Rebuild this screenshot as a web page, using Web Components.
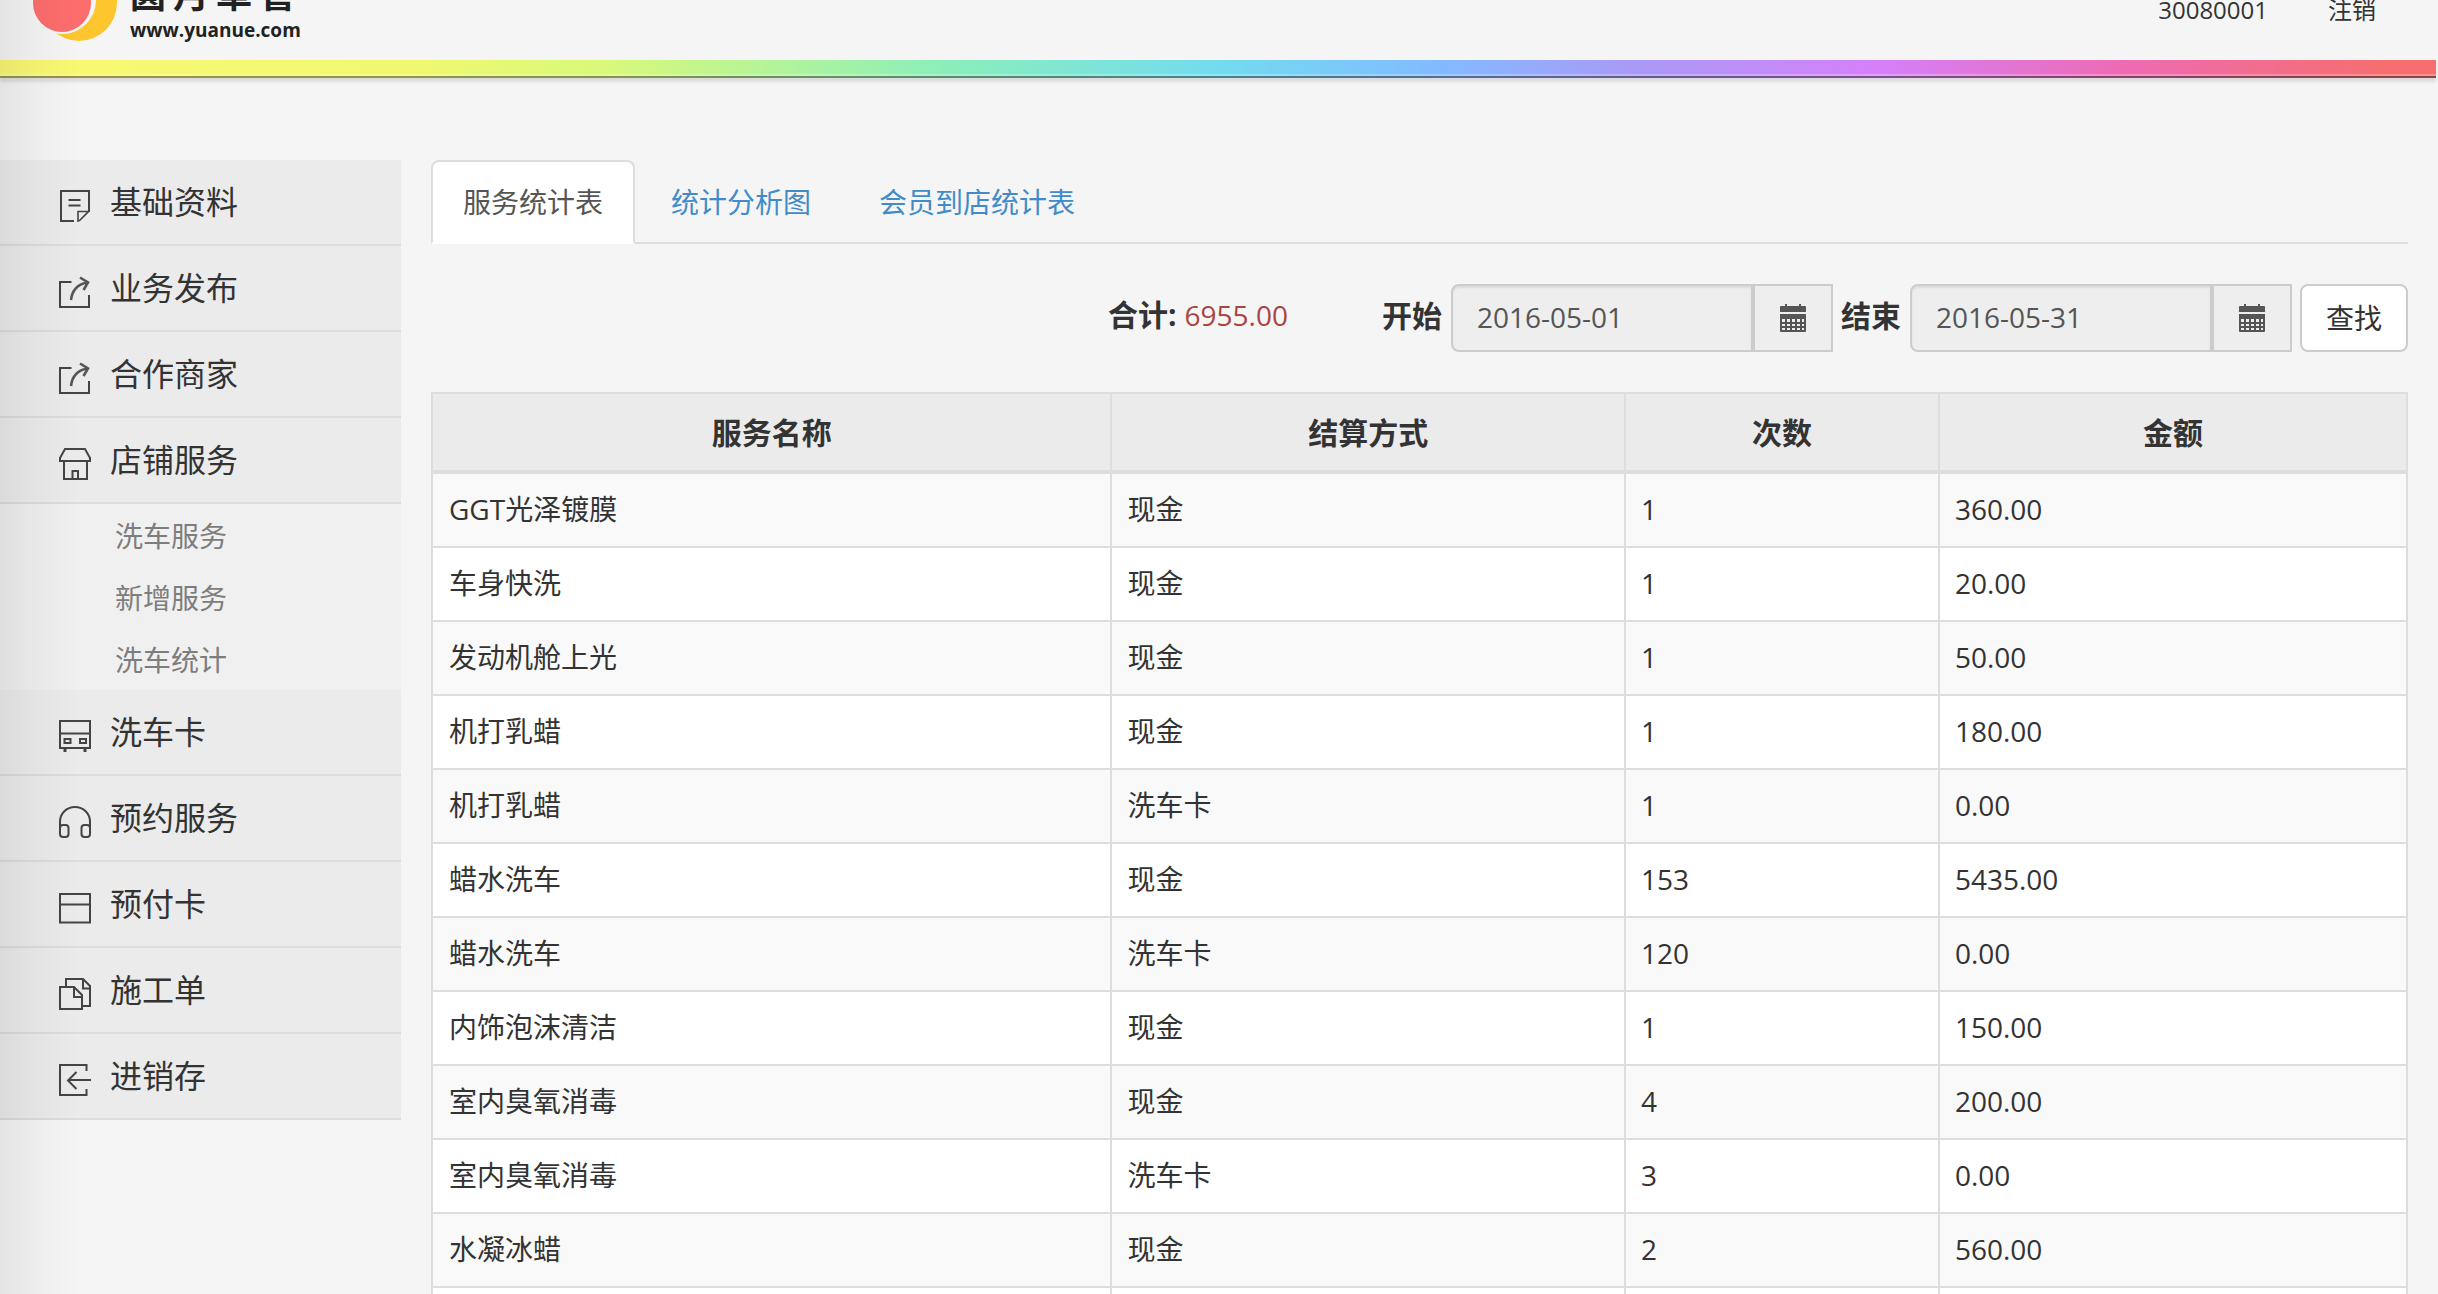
<!DOCTYPE html>
<html lang="zh-CN">
<head>
<meta charset="utf-8">
<title>服务统计表</title>
<style>
html { scrollbar-width: none; background: #f5f5f5; }
body { margin: 0; color: #333; font: 28px/40px "Open Sans", "Noto Sans CJK SC", sans-serif; }
</style>
</head>
<body>
<app-page></app-page>
<script>
const define = (name, html, setup) => customElements.define(name, class extends HTMLElement {
  connectedCallback() {
    if (this.shadowRoot) return;
    const t = document.createElement('template');
    t.innerHTML = html;
    this.attachShadow({ mode: 'open' }).append(t.content.cloneNode(true));
    if (setup) setup(this, this.shadowRoot);
  }
});

const ICONS = {
  note: '<path d="M15 31H2V1h28v21"/><path d="M9.500 10h12M9.500 15.500h12"/><path d="M19 31V21.500h10.500L20.500 30.500z" stroke-width="1.600"/>',
  share: '<path d="M12.500 6H1v25h29V19"/><path d="M12 24C13 15 18 8.500 28 6.500M21 1.500l8 5-4.500 7.500" stroke="#555" stroke-width="2.600"/>',
  shop: '<path d="M6 1h20l5 9v3H1v-3z"/><path d="M5 13v18h23V13M13.500 31v-8h5.500v8"/>',
  bus: '<path d="M1 1h30v27H1zM1 13.500h30"/><path d="M5.500 19h6v4h-6zM21 19h6v4h-6z"/><path d="M6 28v4M26 28v4" stroke-width="3"/>',
  phones: '<path d="M1 27V16C1 7.500 7.500 1 16 1s15 6.500 15 15v11"/><rect x="1" y="19" width="8.500" height="12" rx="3"/><rect x="22.500" y="19" width="8.500" height="12" rx="3"/>',
  card: '<path d="M1 2h30v28.500H1zM1 12.500h30"/>',
  copy: '<path d="M1 9h14l8 8v14H1z"/><path d="M15 9v10h8"/><path d="M7 9V1h17l7 7v20h-8M24 1v9.500h7"/>',
  enter: '<path d="M27.500 7V1H1v30h26.500v-6"/><path d="M32 16H9M17.500 8L9 16.500l8.500 8.500"/>'
};

define('side-item', `<style>
:host { display: block; background: #ebebeb; border-bottom: 2px solid #dcdcdc; }
a { display: flex; align-items: center; gap: 19px; height: 84px; padding-left: 59px; color: #333; font-size: 32px; line-height: 40px; text-decoration: none; }
svg { width: 32px; height: 32px; flex: none; padding-top: 8px; fill: none; stroke: #444; stroke-width: 2; }
</style><a href="#"><svg viewBox="0 0 32 32" aria-hidden="true"></svg><slot></slot></a>`,
  (el, root) => { root.querySelector('svg').innerHTML = ICONS[el.getAttribute('icon')]; });

define('side-sub', `<style>
:host { display: block; background: #f0f0f0; }
a { display: block; padding: 12px 0 10px 115px; color: #7d7d7d; text-decoration: none; }
</style><a href="#"><slot></slot></a>`);

define('side-menu', `<style>
:host { display: block; }
</style><nav>
<side-item icon="note">基础资料</side-item>
<side-item icon="share">业务发布</side-item>
<side-item icon="share">合作商家</side-item>
<side-item icon="shop">店铺服务</side-item>
<side-sub>洗车服务</side-sub>
<side-sub>新增服务</side-sub>
<side-sub>洗车统计</side-sub>
<side-item icon="bus">洗车卡</side-item>
<side-item icon="phones">预约服务</side-item>
<side-item icon="card">预付卡</side-item>
<side-item icon="copy">施工单</side-item>
<side-item icon="enter">进销存</side-item>
</nav>`);

define('brand-logo', `<style>
:host { display: flex; align-items: flex-end; gap: 13px; }
svg { width: 84px; height: 84px; }
.words { display: flex; flex-direction: column; gap: 3px; padding-bottom: 2px; color: #222; font-weight: 700; }
.name { font-size: 36px; line-height: 40px; letter-spacing: 7px; }
.site { font-size: 19px; line-height: 24px; }
</style>
<svg viewBox="0 0 84 84" aria-hidden="true"><circle cx="46" cy="43" r="38" fill="#fdc62f"/><circle cx="29" cy="40" r="34" fill="#f5f5f5"/><circle cx="29" cy="43" r="29" fill="#fe6d6d"/></svg>
<div class="words"><span class="name">圓月車管</span><span class="site">www.yuanue.com</span></div>`);

define('top-bar', `<style>
:host { display: block; margin-right: 2px; }
.bar { display: flex; justify-content: space-between; align-items: flex-end; height: 60px; padding: 0 60px 0 33px; box-sizing: border-box; }
brand-logo { padding-bottom: 16px; }
.user { display: flex; gap: 60px; padding-bottom: 40px; font-size: 24px; line-height: 20px; }
a { color: #333; text-decoration: none; }
.rainbow { height: 18px; box-sizing: border-box; border-bottom: 2px solid rgba(0,0,0,.4); box-shadow: inset 0 -2px rgba(255,255,255,.25), 0 4px 3px rgba(0,0,0,.1);
 background: linear-gradient(90deg, #fbf872 0%, #f0f870 17%, #d8f97a 25%, #8aeebb 39%, #72dcef 50%, #82bbff 59%, #a99af6 67%, #d580fa 77%, #ee6bb4 87%, #f66e6e 98%) border-box; }
</style>
<header><div class="bar"><brand-logo></brand-logo><div class="user"><span>30080001</span><a href="#">注销</a></div></div><div class="rainbow"></div></header>`);

define('tab-bar', `<style>
:host { display: block; }
nav { display: flex; gap: 4px; border-bottom: 2px solid #ddd; }
a { padding: 20px 30px; margin-bottom: -2px; border: 2px solid transparent; border-radius: 8px 8px 0 0; color: #428bca; text-decoration: none; }
a[aria-current] { background: #fff; color: #555; border-color: #ddd #ddd #fff; }
</style><nav><a href="#" aria-current="page">服务统计表</a><a href="#">统计分析图</a><a href="#">会员到店统计表</a></nav>`);

define('date-field', `<style>
:host { display: flex; align-items: center; gap: 9px; }
label { font-size: 30px; font-weight: 700; padding-bottom: 4px; }
.group { display: flex; height: 68px; }
input { box-sizing: border-box; width: 302px; padding: 0 24px 2px; border: 2px solid #ccc; border-radius: 8px 0 0 8px; background: #eee; color: #555; font: inherit; box-shadow: inset 0 2px 2px rgba(0,0,0,.075); outline: 0; }
button { box-sizing: border-box; width: 80px; padding: 0; border: 2px solid #ccc; border-radius: 0; background: #eee; display: grid; place-items: center; }
svg { width: 28px; height: 28px; display: block; }
</style><label for="d"></label><div class="group"><input id="d" type="text" readonly><button type="button" aria-label="选择日期"><svg viewBox="0 0 28 28" aria-hidden="true"><path fill="#555" d="M2 2h4V0h2v2h12V0h2v2h4q1 0 1 1v5H1V3q0-1 1-1zM1 10h26v17q0 1-1 1H2q-1 0-1-1z"/><path fill="#eee" d="M3 15h3v3H3zM8 15h3v3H8zM13 15h3v3h-3zM18 15h3v3h-3zM23 15h2v3h-2zM3 20h3v2H3zM8 20h3v2H8zM13 20h3v2h-3zM18 20h3v2h-3zM23 20h2v2h-2zM3 24h3v2H3zM8 24h3v2H8zM13 24h3v2h-3zM18 24h3v2h-3zM23 24h2v2h-2z"/></svg></button></div>`,
  (el, root) => {
    root.querySelector('label').textContent = el.getAttribute('label');
    root.querySelector('input').value = el.getAttribute('value');
  });

define('filter-bar', `<style>
:host { display: block; }
form { display: flex; justify-content: flex-end; align-items: center; gap: 8px; }
.total { display: flex; gap: 8px; margin-right: 86px; padding-bottom: 6px; }
b { font-size: 30px; }
.sum { color: #a94442; }
.go { height: 68px; padding: 0 24px; border: 2px solid #ccc; border-radius: 8px; background: #fff; color: #333; font: inherit; }
</style><form><div class="total"><b>合计:</b><span class="sum">6955.00</span></div>
<date-field label="开始" value="2016-05-01"></date-field>
<date-field label="结束" value="2016-05-31"></date-field>
<button class="go" type="button">查找</button></form>`);

const ROWS = [
  ['GGT光泽镀膜', '现金', '1', '360.00'],
  ['车身快洗', '现金', '1', '20.00'],
  ['发动机舱上光', '现金', '1', '50.00'],
  ['机打乳蜡', '现金', '1', '180.00'],
  ['机打乳蜡', '洗车卡', '1', '0.00'],
  ['蜡水洗车', '现金', '153', '5435.00'],
  ['蜡水洗车', '洗车卡', '120', '0.00'],
  ['内饰泡沫清洁', '现金', '1', '150.00'],
  ['室内臭氧消毒', '现金', '4', '200.00'],
  ['室内臭氧消毒', '洗车卡', '3', '0.00'],
  ['水凝冰蜡', '现金', '2', '560.00'],
  ['', '', '', '']
];

define('stat-table', `<style>
:host { display: block; }
table { width: 100%; table-layout: fixed; border-collapse: separate; border-spacing: 0; border: solid #ddd; border-width: 2px 0 0 2px; }
th, td { border: solid #ddd; border-width: 0 2px 2px 0; padding: 15px 15px 17px; height: 40px; }
td:first-child { padding-left: 16px; }
th { background: #ebebeb; border-bottom-width: 4px; padding: 19px 16px 17px; font-size: 30px; }
td { background: #fff; }
tr:nth-child(odd) td { background: #f9f9f9; }
</style><table><colgroup><col style="width:34.4%"><col style="width:26%"><col style="width:15.9%"><col></colgroup>
<thead><tr><th>服务名称</th><th>结算方式</th><th>次数</th><th>金额</th></tr></thead><tbody></tbody></table>`,
  (el, root) => {
    root.querySelector('tbody').innerHTML = ROWS.map(r => '<tr>' + r.map(c => `<td>${c}</td>`).join('') + '</tr>').join('');
  });

define('app-page', `<style>
:host { display: block; height: 100vh; overflow: hidden; position: relative; }
:host::after { content: ""; position: absolute; inset: 0 auto 0 0; width: 80px; pointer-events: none; background: linear-gradient(90deg, rgba(0,0,0,.07), rgba(0,0,0,.035) 40%, transparent); }
.cols { display: flex; gap: 30px; padding: 82px 30px 0 0; }
side-menu { flex: 0 0 401px; }
main { flex: 1; min-width: 0; }
filter-bar { padding: 40px 0; }
</style><top-bar></top-bar><div class="cols"><side-menu></side-menu><main><tab-bar></tab-bar><filter-bar></filter-bar><stat-table></stat-table></main></div>`);
</script>
</body>
</html>
